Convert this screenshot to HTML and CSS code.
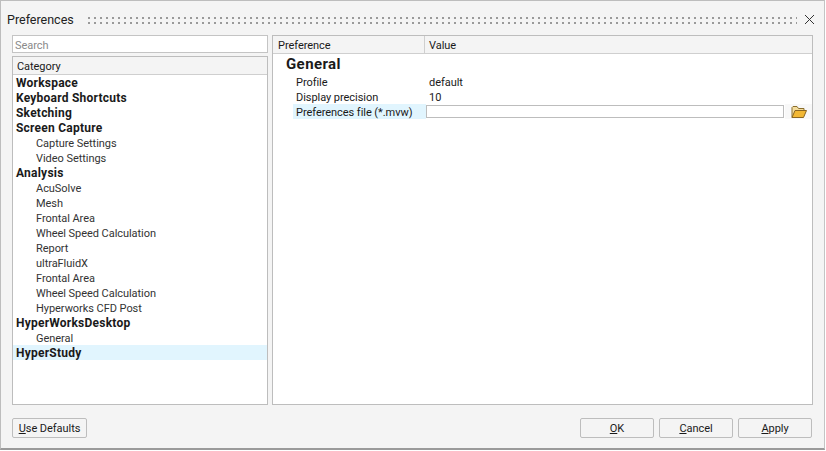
FILE: index.html
```html
<!DOCTYPE html>
<html lang="en">
<head>
<meta charset="utf-8">
<title>Preferences</title>
<link rel="stylesheet" href="styles.css">
</head>
<body>
<div class="window">
  <div class="titlebar">
    <span class="title">Preferences</span>
    <span class="grip"></span>
    <svg class="close" width="11" height="11" viewBox="0 0 11 11"><path d="M1 1 L10 10 M10 1 L1 10" stroke="#333" stroke-width="1" fill="none"/></svg>
  </div>
  <div class="main">
    <div class="left">
      <div class="search">Search</div>
      <div class="list">
        <div class="list-head">Category</div>
        <div class="row b">Workspace</div>
        <div class="row b">Keyboard Shortcuts</div>
        <div class="row b">Sketching</div>
        <div class="row b">Screen Capture</div>
        <div class="row c">Capture Settings</div>
        <div class="row c">Video Settings</div>
        <div class="row b">Analysis</div>
        <div class="row c">AcuSolve</div>
        <div class="row c">Mesh</div>
        <div class="row c">Frontal Area</div>
        <div class="row c">Wheel Speed Calculation</div>
        <div class="row c">Report</div>
        <div class="row c">ultraFluidX</div>
        <div class="row c">Frontal Area</div>
        <div class="row c">Wheel Speed Calculation</div>
        <div class="row c">Hyperworks CFD Post</div>
        <div class="row b">HyperWorksDesktop</div>
        <div class="row c">General</div>
        <div class="row b sel">HyperStudy</div>
      </div>
    </div>
    <div class="right">
      <div class="table-head">
        <div class="col1">Preference</div>
        <div class="col2">Value</div>
      </div>
      <div class="section">General</div>
      <div class="prop"><div class="pname">Profile</div><div class="pval">default</div></div>
      <div class="prop"><div class="pname">Display precision</div><div class="pval">10</div></div>
      <div class="prop">
        <div class="pname hl">Preferences file (*.mvw)</div>
        <div class="pfile"></div>
        <div class="folder-cell">
          <svg class="folder" width="16" height="14" viewBox="0 0 16 14">
            <path d="M1 12.5 V2.5 L2 1.5 H6 L7.5 3.5 H13 V6" fill="#f3dc9c" stroke="#8a6d2c" stroke-width="1"/>
            <path d="M1 12.5 L4 5.5 H15.5 L12.5 12.5 Z" fill="#f2b733" stroke="#8a6520" stroke-width="1"/>
          </svg>
        </div>
      </div>
    </div>
  </div>
  <div class="footer">
    <button class="btn wide"><u>U</u>se Defaults</button>
    <div class="actions">
      <button class="btn"><u>O</u>K</button>
      <button class="btn"><u>C</u>ancel</button>
      <button class="btn"><u>A</u>pply</button>
    </div>
  </div>
</div>
</body>
</html>
```
FILE: styles.css
```css
* { box-sizing: border-box; }
html, body { margin: 0; padding: 0; background: #fff; }
body {
  width: 826px;
  height: 451px;
  overflow: hidden;
  font-family: Roboto, "Open Sans", sans-serif;
  font-size: 11px;
  letter-spacing: -0.05px;
  color: #1a1a1a;
}
.window {
  width: 825px;
  height: 450px;
  background: #f4f4f4;
  border: 1px solid #bdbdbd;
  border-bottom: 2px solid #9a9a9a;
  border-right: 1px solid #c4c4c4;
  display: flex;
  flex-direction: column;
  padding: 0 11px 0 11px;
}
.titlebar {
  height: 34px;
  display: flex;
  align-items: center;
  margin: 0 -4px 0 -5px;
  padding-top: 3px;
}
.title { font-size: 12.5px; letter-spacing: 0; width: 81px; flex: none; color: #222; }
.grip {
  width: 709px;
  height: 7px;
  flex: none;
  margin-top: 1px;
  background-image: radial-gradient(circle at 1px 1px, #9a9a9a 1px, transparent 1.1px);
  background-size: 6px 5px;
}
.close { margin-left: 7px; flex: none; }
.main { display: flex; gap: 4px; height: 370px; flex: none; }
.left { width: 256px; display: flex; flex-direction: column; gap: 3px; flex: none; }
.search {
  height: 18px;
  border: 1px solid #c4c4c4;
  background: #fff;
  color: #8a8a8a;
  padding-left: 2px;
  line-height: 19px;
}
.list { flex: 1; border: 1px solid #bdbdbd; background: #fff; }
.list-head {
  height: 18px;
  background: #f4f4f4;
  border-bottom: 1px solid #cfcfcf;
  padding-left: 4px;
  line-height: 19px;
}
.row { height: 15px; line-height: 17px; padding-left: 3px; white-space: nowrap; }
.row.b { font-weight: 700; font-size: 12px; letter-spacing: 0.23px; }
.row.c { padding-left: 23px; color: #333; }
.row.sel { background: #e1f5fe; }
.right { width: 541px; flex: none; background: #fff; border: 1px solid #bdbdbd; }
.table-head { display: flex; height: 18px; background: #f4f4f4; border-bottom: 1px solid #cfcfcf; line-height: 19px; }
.col1 { width: 152px; padding-left: 5px; border-right: 1px solid #cfcfcf; flex: none; }
.col2 { padding-left: 4px; }
.section { font-weight: 700; font-size: 15px; letter-spacing: 0.4px; padding-left: 13px; height: 20px; line-height: 21px; }
.prop { display: flex; align-items: center; height: 15px; line-height: 17px; }
.pname { width: 133px; height: 15px; margin-left: 20px; padding-left: 3px; flex: none; white-space: nowrap; }
.hl { background: #e1f5fe; }
.pval { padding-left: 3px; height: 15px; }
.pfile { width: 358px; height: 13px; background: #fff; border: 1px solid #bdbdbd; flex: none; }
.folder-cell { flex: 1; height: 15px; margin-left: 1px; padding-left: 6px; background: #f8f8f8; display: flex; align-items: center; }
.folder { flex: none; }
.footer { display: flex; justify-content: space-between; margin: 13px 1px 0 0; }
.actions { display: flex; gap: 5px; }
.btn {
  width: 74px;
  height: 20px;
  padding: 0;
  background: #f4f4f4;
  border: 1px solid #bdbdbd;
  border-radius: 2px;
  font: inherit;
  letter-spacing: inherit;
  color: #1a1a1a;
  line-height: 17px;
}
.btn.wide { width: 75px; }
```
